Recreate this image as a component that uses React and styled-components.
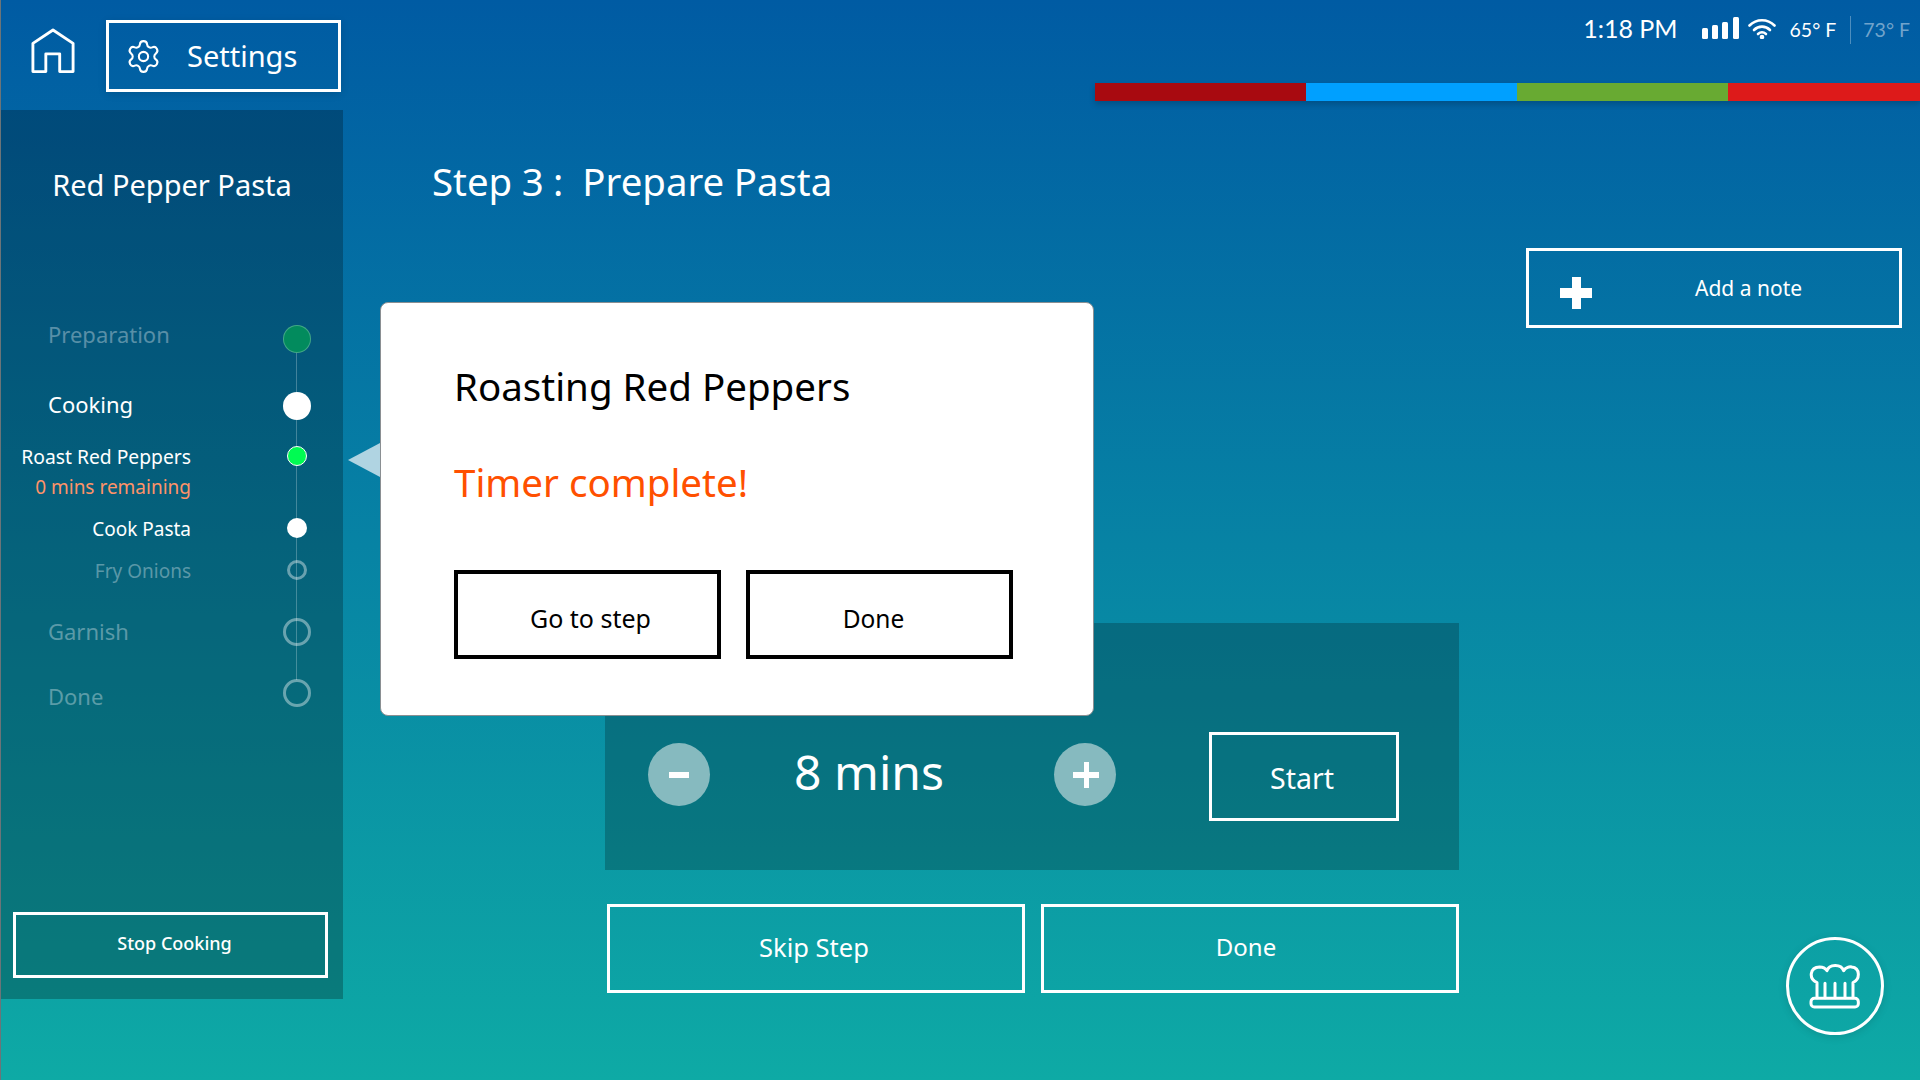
import React from "react";
import styled, { createGlobalStyle } from "styled-components";
import { Settings as GearIcon } from "lucide-react";

const Global = createGlobalStyle`
  html, body { margin: 0; padding: 0; }
  body { font-family: "Noto Sans", "Open Sans", sans-serif; }
  * { box-sizing: border-box; }
`;

const Page = styled.div`
  width: 1920px; height: 1080px; overflow: hidden; position: relative;
  display: flex; flex-direction: column;
  border-left: 1px solid #6c7478;
  background: linear-gradient(180deg, #005ba3 0%, #0eaaa5 100%);
  color: #fff;
`;
const Header = styled.header`
  height: 110px; display: flex; justify-content: space-between;
`;
const NavGroup = styled.div`
  display: flex; align-items: flex-start; padding: 20px 0 0 30px;
`;
const HomeButton = styled.div`
  width: 46px; height: 56px; margin: 8px 29px 0 0;
`;
const SettingsButton = styled.div`
  width: 235px; height: 72px; border: 3px solid #fff;
  display: flex; align-items: center; padding: 0 0 0 16px; gap: 25px;
  font-size: 29px; box-shadow: 0 2px 8px rgba(0,0,0,.12);
`;
const SettingsLabel = styled.span`
  position: relative; top: -1px;
`;
const StatusColumn = styled.div`
  width: 825px; display: flex; flex-direction: column;
`;
const StatusBar = styled.div`
  height: 83px; display: flex; align-items: flex-start; justify-content: flex-end;
  padding: 16px 10px 0 0; font-family: Lato, sans-serif;
`;
const Clock = styled.span`
  font-size: 25px; line-height: 24px; margin-right: 24px; white-space: nowrap;
`;
const Temp = styled.span`
  font-size: 19.500px; line-height: 28px; white-space: nowrap; color: ${p => p.$dim ? "rgba(255,255,255,.45)" : "#fff"};
`;
const Divider = styled.span`
  width: 1px; height: 28px; background: rgba(255,255,255,.3); margin: 0 12px 0 14px;
`;
const ColorBar = styled.div`
  display: flex; height: 18px; box-shadow: 0 3px 6px rgba(0,0,0,.2);
`;
const ColorSegment = styled.div`
  flex: 0 0 ${p => p.$width}px; background: ${p => p.$color};
`;
const Body = styled.div`
  flex: 1; display: flex; align-items: flex-start;
`;
const Sidebar = styled.aside`
  width: 342px; height: 889px; display: flex; flex-direction: column;
  background: rgba(0,0,0,.25); position: relative;
`;
const RecipeName = styled.h2`
  margin: 0; height: 150px; display: flex; align-items: center; justify-content: center;
  font-size: 29px; font-weight: 400; padding-bottom: 2px;
`;
const StepList = styled.div`
  position: relative; padding-top: 65px; flex: 1;
`;
const Connector = styled.div`
  position: absolute; left: 295px; top: 79px; height: 341px; width: 1px; background: rgba(255,255,255,.25);
`;
const StepRow = styled.div`
  display: grid; grid-template-columns: 190px 28px; column-gap: 92px;
  align-items: ${p => p.$top ? "flex-start" : "center"};
  margin-top: ${p => p.$mt || 0}px;
  position: relative;
`;
const MainLabel = styled.div`
  padding-left: 47px; font-size: 22px; line-height: 28px;
  position: relative; top: ${p => p.$nudge || 0}px;
  color: ${p => p.$dim ? "rgba(255,255,255,.35)" : "#fff"};
`;
const SubLabel = styled.div`
  text-align: right; font-size: ${p => p.$size || 19}px; line-height: 20px; white-space: nowrap;
  position: relative; top: 1px;
  color: ${p => p.$dim ? "rgba(255,255,255,.35)" : "#fff"};
`;
const Remaining = styled.div`
  color: #ff9368; margin-top: 10px; line-height: 20px; font-size: 19px;
`;
const Dot = styled.div`
  width: ${p => p.$size}px; height: ${p => p.$size}px; border-radius: 50%; justify-self: center;
  background: ${p => p.$fill || "transparent"};
  border: ${p => p.$border || "none"};
`;
const StopButton = styled.div`
  position: absolute; left: 12px; top: 802px; width: 315px; height: 66px;
  border: 3px solid #fff; display: flex; align-items: center; justify-content: center;
  font-size: 18px; font-weight: 500; padding: 0 0 4px 8px;
`;
const Main = styled.main`
  flex: 1; display: flex; flex-direction: column; height: 889px;
`;
const TopZone = styled.div`
  height: 513px; display: flex; justify-content: space-between; align-items: flex-start;
  padding: 47px 18px 0 89px;
`;
const StepTitle = styled.h1`
  margin: 0; font-size: 38.400px; line-height: 48px; font-weight: 400; white-space: pre; word-spacing: -0.5px;
`;
const NoteButton = styled.div`
  margin-top: 91px; width: 376px; height: 80px; border: 3px solid #fff;
  display: flex; align-items: center; position: relative;
  font-size: 21px; padding: 0 0 0 31px;
`;
const NoteText = styled.span`
  margin-left: 103px;
`;
const Work = styled.div`
  margin-left: 262px; width: 854px; display: flex; flex-direction: column;
`;
const TimerPanel = styled.section`
  height: 247px; background: rgba(0,0,0,.22); padding: 109px 0 0 43px;
  display: grid; grid-template-columns: 62px 344px 62px 190px; column-gap: 0;
  align-items: start;
`;
const RoundButton = styled.div`
  width: 62px; height: 63px; margin-top: 11px; border-radius: 50%; background: #86babf;
  display: flex; align-items: center; justify-content: center;
`;
const Duration = styled.div`
  font-size: 48px; line-height: 64px; margin-top: 8px; text-align: center; padding-right: 26px;
`;
const StartButton = styled.div`
  margin-left: 93px; width: 190px; height: 89px; border: 3px solid #fff;
  display: flex; align-items: center; justify-content: center;
  font-size: 28.500px; padding: 2px 4px 0 0;
`;
const ActionRow = styled.div`
  margin-top: 34px; padding-left: 2px; display: grid; grid-template-columns: 418px 418px; column-gap: 16px;
`;
const ActionButton = styled.div`
  height: 89px; border: 3px solid #fff; display: flex; align-items: center; justify-content: center;
  font-size: ${p => p.$size}px; padding: 0 ${p => p.$pr || 0}px 4px 0;
`;
const Modal = styled.div`
  position: absolute; left: 379px; top: 302px; width: 714px; height: 414px;
  background: #fff; border: 1px solid #8a8f92; border-radius: 8px; color: #000;
  padding: 0 0 0 73px;
`;
const Pointer = styled.div`
  position: absolute; left: -33px; top: 140px; width: 0; height: 0;
  border-top: 17px solid transparent; border-bottom: 17px solid transparent;
  border-right: 32px solid #b0d4e2;
`;
const ModalTitle = styled.h3`
  margin: 0; padding-top: 57px; font-size: 38.500px; line-height: 52px; font-weight: 400; white-space: nowrap;
`;
const ModalAlert = styled.p`
  margin: 44px 0 0 0; font-size: 38.500px; line-height: 52px; color: #ff5000; white-space: nowrap;
`;
const ModalButtons = styled.div`
  margin-top: 62px; display: flex; gap: 25px;
`;
const ModalButton = styled.div`
  width: 267px; height: 89px; border: 4px solid #000; display: flex; align-items: center; justify-content: center;
  font-size: ${p => p.$size}px; padding: 7px ${p => p.$pr || 0}px 0 ${p => p.$pl || 0}px;
`;
const ChefButton = styled.div`
  position: absolute; left: 1785px; top: 937px; width: 98px; height: 98px;
  border: 3.5px solid #fff; border-radius: 50%;
  display: flex; align-items: center; justify-content: center;
  box-shadow: 0 2px 8px rgba(0,0,0,.12);
`;
const Icon = styled.svg`
  display: block; flex: none;
`;
const PlusMark = styled.span`
  position: relative; display: block; width: 32px; height: 32px; flex: none; margin-top: 10px;
  &::before { content: ""; position: absolute; left: 11.500px; top: 0; width: 9px; height: 32px; background: #fff; }
  &::after { content: ""; position: absolute; left: 0; top: 11px; width: 32px; height: 10px; background: #fff; }
`;
const SmallPlus = styled.span`
  position: relative; display: block; width: 26px; height: 26px; left: 1px;
  &::before { content: ""; position: absolute; left: 10.500px; top: 0; width: 5px; height: 26px; background: #fff; }
  &::after { content: ""; position: absolute; left: 0; top: 10px; width: 26px; height: 6px; background: #fff; }
`;
const SmallMinus = styled.span`
  display: block; width: 20px; height: 6px; background: #fff;
`;

const HomeIcon = () => (
  <Icon width="44" height="46" viewBox="0 0 46 48" fill="none" stroke="#fff" strokeWidth="3" strokeLinejoin="round">
    <path d="M2 45.5V16L23 2L44 16V45.5H30V27H15.500V45.5Z" />
  </Icon>
);
const SignalIcon = () => (
  <Icon width="37" height="22" viewBox="0 0 37 22" fill="#fff" style={{ marginTop: 1, marginRight: 9 }}>
    <rect x="0" y="11" width="6" height="11" rx="1.500" />
    <rect x="10" y="8" width="6" height="14" rx="1.500" />
    <rect x="20" y="5" width="6" height="17" rx="1.500" />
    <rect x="31" y="0" width="6" height="22" rx="1.500" />
  </Icon>
);
const WifiIcon = () => (
  <Icon width="28" height="21" viewBox="0 0 28 21" fill="none" stroke="#fff" strokeWidth="2.600" strokeLinecap="round" style={{ marginTop: 2, marginRight: 14 }}>
    <path d="M1.500 7.500C8.500 .5 19.500 .5 26.500 7.500" />
    <path d="M6 12C10.500 7.500 17.500 7.500 22 12" />
    <path d="M10 16C12.500 13.800 15.500 13.800 18 16" />
    <circle cx="14" cy="19" r="1" fill="#fff" />
  </Icon>
);
const ChefIcon = () => (
  <Icon width="52" height="52" viewBox="0 0 156 156" fill="none" stroke="#fff" strokeWidth="9" strokeLinecap="round" strokeLinejoin="round">
    <path d="M24 113V68C-2 56 2 22 32 21C43 21 50 26 54 32C60 12 96 10 104 32C110 22 122 19 128 21C154 24 154 58 132 68V113" />
    <path d="M48 70V113M78 70V113M108 70V113" />
    <rect x="6" y="115" width="142" height="26" rx="10" />
  </Icon>
);

export default function App() {
  return (
    <Page>
      <Global />
      <Header>
        <NavGroup>
          <HomeButton><HomeIcon /></HomeButton>
          <SettingsButton>
            <GearIcon size={37} strokeWidth={1.350} color="#fff" />
            <SettingsLabel>Settings</SettingsLabel>
          </SettingsButton>
        </NavGroup>
        <StatusColumn>
          <StatusBar>
            <Clock>1:18 PM</Clock>
            <SignalIcon />
            <WifiIcon />
            <Temp>65° F</Temp>
            <Divider />
            <Temp $dim>73° F</Temp>
          </StatusBar>
          <ColorBar>
            <ColorSegment $width={211} $color="#a80a10" />
            <ColorSegment $width={211} $color="#00a0ff" />
            <ColorSegment $width={211} $color="#68aa32" />
            <ColorSegment $width={192} $color="#dd1a1a" />
          </ColorBar>
        </StatusColumn>
      </Header>
      <Body>
        <Sidebar>
          <RecipeName>Red Pepper Pasta</RecipeName>
          <StepList>
            <Connector />
            <StepRow>
              <MainLabel $dim $nudge={-5}>Preparation</MainLabel>
              <Dot $size={28} $fill="#028b5d" $border="1px solid rgba(255,255,255,.25)" />
            </StepRow>
            <StepRow $mt={39}>
              <MainLabel $nudge={-2}>Cooking</MainLabel>
              <Dot $size={28} $fill="#fff" />
            </StepRow>
            <StepRow $mt={26} $top>
              <SubLabel $size={19.3}>Roast Red Peppers<Remaining>0 mins remaining</Remaining></SubLabel>
              <Dot $size={20} $fill="#00fb52" $border="1.500px solid #fff" />
            </StepRow>
            <StepRow $mt={22}>
              <SubLabel>Cook Pasta</SubLabel>
              <Dot $size={20} $fill="#fff" />
            </StepRow>
            <StepRow $mt={22}>
              <SubLabel $dim>Fry Onions</SubLabel>
              <Dot $size={20} $border="3px solid rgba(255,255,255,.4)" />
            </StepRow>
            <StepRow $mt={38}>
              <MainLabel $dim $nudge={-1}>Garnish</MainLabel>
              <Dot $size={28} $border="3px solid rgba(255,255,255,.4)" />
            </StepRow>
            <StepRow $mt={33}>
              <MainLabel $dim $nudge={3}>Done</MainLabel>
              <Dot $size={28} $border="3px solid rgba(255,255,255,.4)" />
            </StepRow>
          </StepList>
          <StopButton>Stop Cooking</StopButton>
        </Sidebar>
        <Main>
          <TopZone>
            <StepTitle>Step 3 :  Prepare Pasta</StepTitle>
            <NoteButton>
              <PlusMark />
              <NoteText>Add a note</NoteText>
            </NoteButton>
          </TopZone>
          <Work>
            <TimerPanel>
              <RoundButton><SmallMinus /></RoundButton>
              <Duration>8 mins</Duration>
              <RoundButton><SmallPlus /></RoundButton>
              <StartButton>Start</StartButton>
            </TimerPanel>
            <ActionRow>
              <ActionButton $size={25.5} $pr={4}>Skip Step</ActionButton>
              <ActionButton $size={24} $pr={8}>Done</ActionButton>
            </ActionRow>
          </Work>
        </Main>
      </Body>
      <Modal>
        <Pointer />
        <ModalTitle>Roasting Red Peppers</ModalTitle>
        <ModalAlert>Timer complete!</ModalAlert>
        <ModalButtons>
          <ModalButton $size={25} $pl={6}>Go to step</ModalButton>
          <ModalButton $size={24.5} $pr={12}>Done</ModalButton>
        </ModalButtons>
      </Modal>
      <ChefButton><ChefIcon /></ChefButton>
    </Page>
  );
}
